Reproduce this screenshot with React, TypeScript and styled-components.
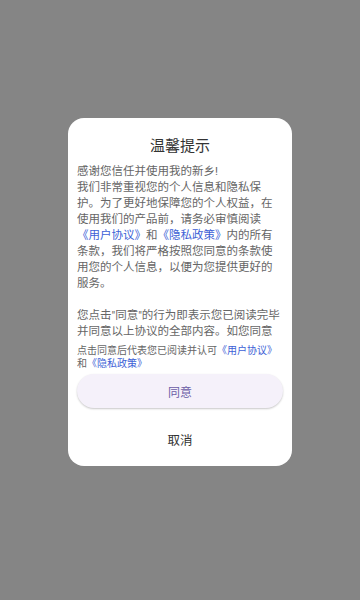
import React from "react";
import styled, { createGlobalStyle } from "styled-components";

const GlobalStyle = createGlobalStyle`
  html, body {
    margin: 0;
    padding: 0;
    height: 100%;
  }
  body {
    font-family: Roboto, "Noto Sans CJK SC", sans-serif;
  }
  #root {
    height: 100%;
  }
`;

const Overlay = styled.div`
  width: 360px;
  height: 600px;
  background: #858585;
  display: flex;
  align-items: center;
  justify-content: center;
  padding-bottom: 16px;
  box-sizing: border-box;
`;

const Card = styled.div`
  width: 224px;
  height: 348px;
  box-sizing: border-box;
  background: #ffffff;
  border-radius: 16px;
  padding: 18px 9px 8px;
  display: flex;
  flex-direction: column;
`;

const Title = styled.div`
  font-size: 15px;
  line-height: 20px;
  color: #333333;
  text-align: center;
`;

const Body = styled.div`
  margin-top: 7px;
  height: 176px;
  flex-shrink: 0;
  overflow-y: auto;
  scrollbar-width: none;
  font-size: 11.5px;
  line-height: 16px;
  color: #666666;
  &::-webkit-scrollbar {
    display: none;
  }
`;

const Para = styled.p`
  margin: 0;
  & + & {
    margin-top: 16px;
  }
`;

const Link = styled.span`
  color: #3d5fd6;
`;

const Notice = styled.div`
  margin-top: 6px;
  font-size: 10px;
  line-height: 12.5px;
  color: #666666;
`;

const AgreeButton = styled.button`
  margin-top: 4px;
  height: 34px;
  width: 100%;
  border: none;
  border-radius: 17px;
  background: #f5f1fa;
  box-shadow: 0 1px 2px rgba(0, 0, 0, 0.22);
  font-family: inherit;
  font-size: 12px;
  color: #6b5ca6;
  cursor: pointer;
  flex-shrink: 0;
`;

const CancelButton = styled.button`
  margin-top: 13px;
  height: 36px;
  width: 100%;
  border: none;
  background: transparent;
  font-family: inherit;
  font-size: 12.5px;
  color: #333333;
  cursor: pointer;
  flex-shrink: 0;
`;

export default function App() {
  return (
    <>
      <GlobalStyle />
      <Overlay>
        <Card>
          <Title>温馨提示</Title>
          <Body>
            <Para>
              感谢您信任并使用我的新乡!
              <br />
              我们非常重视您的个人信息和隐私保护。为了更好地保障您的个人权益，在使用我们的产品前，请务必审慎阅读
              <Link>《用户协议》</Link>和<Link>《隐私政策》</Link>
              内的所有条款，我们将严格按照您同意的条款使用您的个人信息，以便为您提供更好的服务。
            </Para>
            <Para>
              您点击"同意"的行为即表示您已阅读完毕并同意以上协议的全部内容。如您同意以上协议内容，请点击"同意"，开始使用我们的产品和服务。
            </Para>
          </Body>
          <Notice>
            点击同意后代表您已阅读并认可<Link>《用户协议》</Link>和
            <Link>《隐私政策》</Link>
          </Notice>
          <AgreeButton>同意</AgreeButton>
          <CancelButton>取消</CancelButton>
        </Card>
      </Overlay>
    </>
  );
}
